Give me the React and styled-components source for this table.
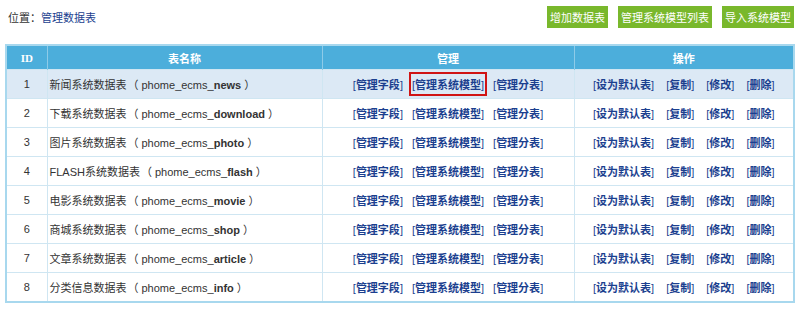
import React from 'react';
import styled, { createGlobalStyle } from 'styled-components';

const GlobalStyle = createGlobalStyle`
  body {
    margin: 0;
    background: #fff;
    font-family: "Liberation Sans", "Noto Sans CJK SC", sans-serif;
    font-size: 11px;
    color: #333;
  }
`;

const Page = styled.div`
  width: 800px;
  padding: 6px 5px 0 5px;
  box-sizing: border-box;
`;

const TopBar = styled.div`
  display: flex;
  align-items: center;
  justify-content: space-between;
  height: 22px;
  padding-left: 3px;
`;

const Crumb = styled.div`
  color: #333;
  a {
    color: #1b3f8f;
    text-decoration: none;
  }
`;

const Buttons = styled.div`
  display: flex;
  gap: 10px;
  padding-right: 1px;
`;

const GreenButton = styled.button`
  height: 22px;
  padding: 0 3px;
  border: none;
  background: #79b82c;
  color: #fff;
  font-family: "Liberation Sans", "Noto Sans CJK SC", sans-serif;
  font-size: 11px;
  cursor: pointer;
`;

const Table = styled.table`
  margin-top: 16px;
  width: 790px;
  border-collapse: collapse;
  border: 2px solid #a8d8ee;
  table-layout: fixed;
`;

const Th = styled.th`
  height: 23px;
  background: #4caedb;
  color: #fff;
  font-weight: bold;
  font-size: 11px;
  border-left: 1px solid #8ecbe8;
  padding: 0;
  font-family: ${p => (p.$serif ? '"Liberation Serif", serif' : 'inherit')};
  &:first-child {
    border-left: none;
  }
`;

const Tr = styled.tr`
  background: ${p => (p.$active ? '#dce9f5' : '#fff')};
`;

const Td = styled.td`
  height: 28px;
  padding: 0;
  border-top: 1px solid #cfe6f2;
  border-left: 1px solid #cfe6f2;
  text-align: ${p => p.$align || 'center'};
  padding-left: ${p => p.$pad || 0}px;
  white-space: nowrap;
  &:first-child {
    border-left: none;
  }
`;

const Paren = styled.span`
  margin: ${p => (p.$close ? '0 0 0 3px' : '0 3px 0 1px')};
`;

const Links = styled.div`
  display: flex;
  justify-content: center;
  align-items: center;
  gap: ${p => p.$gap}px;
`;

const Link = styled.a`
  color: #1b3f8f;
  font-weight: 700;
  text-decoration: none;
  padding: 2px 1px;
  border: 2px solid ${p => (p.$boxed ? '#d01414' : 'transparent')};
`;

const Bracket = styled.span`
  font-weight: normal;
`;

const ActionLink = ({ label, boxed }) => (
  <Link href="#" $boxed={boxed}>
    <Bracket>[</Bracket>
    {label}
    <Bracket>]</Bracket>
  </Link>
);

const rows = [
  ['新闻系统数据表', 'news'],
  ['下载系统数据表', 'download'],
  ['图片系统数据表', 'photo'],
  ['FLASH系统数据表', 'flash'],
  ['电影系统数据表', 'movie'],
  ['商城系统数据表', 'shop'],
  ['文章系统数据表', 'article'],
  ['分类信息数据表', 'info'],
];

const App = () => {
  return (
    <Page>
      <GlobalStyle />
      <TopBar>
        <Crumb>
          位置：<a href="#">管理数据表</a>
        </Crumb>
        <Buttons>
          <GreenButton>增加数据表</GreenButton>
          <GreenButton>管理系统模型列表</GreenButton>
          <GreenButton>导入系统模型</GreenButton>
        </Buttons>
      </TopBar>

      <Table>
        <colgroup>
          <col style={{ width: 41 }} />
          <col style={{ width: 275 }} />
          <col style={{ width: 252 }} />
          <col />
        </colgroup>
        <thead>
          <tr>
            <Th $serif>ID</Th>
            <Th>表名称</Th>
            <Th>管理</Th>
            <Th>操作</Th>
          </tr>
        </thead>
        <tbody>
          {rows.map(([name, key], i) => (
            <Tr key={key} $active={i === 0}>
              <Td>{i + 1}</Td>
              <Td $align="left" $pad={2}>
                {name}
                <Paren>（</Paren>phome_ecms_<b>{key}</b>
                <Paren $close>）</Paren>
              </Td>
              <Td>
                <Links $gap={3}>
                  <ActionLink label="管理字段" />
                  <ActionLink label="管理系统模型" boxed={i === 0} />
                  <ActionLink label="管理分表" />
                </Links>
              </Td>
              <Td>
                <Links $gap={6}>
                  <ActionLink label="设为默认表" />
                  <ActionLink label="复制" />
                  <ActionLink label="修改" />
                  <ActionLink label="删除" />
                </Links>
              </Td>
            </Tr>
          ))}
        </tbody>
      </Table>
    </Page>
  );
};

export default App;
